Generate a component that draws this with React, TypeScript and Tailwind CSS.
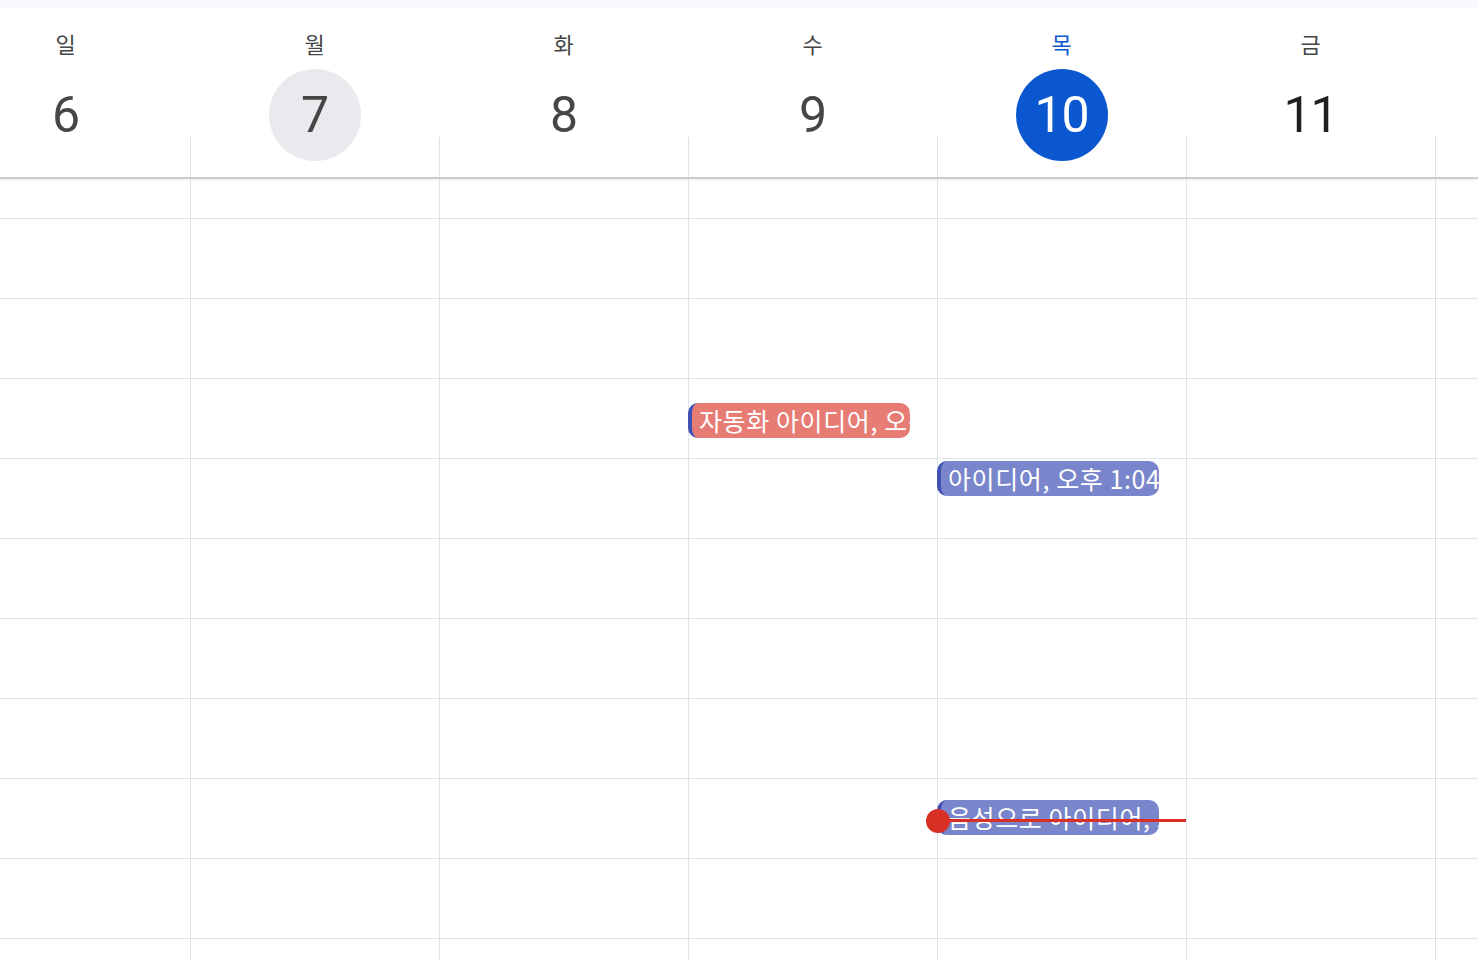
import React from 'react';

type Day = { name: string; date: number; state: 'past' | 'hover' | 'today' | 'future' | 'offscreen' };

const days: Day[] = [
  { name: '일', date: 6, state: 'past' },
  { name: '월', date: 7, state: 'hover' },
  { name: '화', date: 8, state: 'past' },
  { name: '수', date: 9, state: 'past' },
  { name: '목', date: 10, state: 'today' },
  { name: '금', date: 11, state: 'future' },
  { name: '토', date: 12, state: 'offscreen' },
];

type CalEvent = { day: number; top: number; title: string; color: 'red' | 'blue' };

const events: CalEvent[] = [
  { day: 3, top: 224, title: '자동화 아이디어, 오전 11:30', color: 'red' },
  { day: 4, top: 282, title: '아이디어, 오후 1:04', color: 'blue' },
  { day: 4, top: 621, title: '음성으로 아이디어, 오후 5:20', color: 'blue' },
];

const rows = Array.from({ length: 10 });

const font = { fontFamily: '"Noto Sans CJK KR", "Noto Sans", sans-serif' };

const DayHeader: React.FC<{ day: Day }> = ({ day }) => {
  const circle =
    day.state === 'today'
      ? 'bg-[#0b57d0] text-white'
      : day.state === 'hover'
      ? 'bg-[#e9eaed] text-[#444746]'
      : day.state === 'future'
      ? 'text-[#1f1f1f]'
      : 'text-[#444746]';

  const hidden = day.state === 'offscreen';

  return (
    <div className="w-[249px] shrink-0 flex flex-col">
      <div
        className={`mt-[20px] h-[30px] flex items-center justify-center text-[22px] leading-none ${
          day.state === 'today' ? 'text-[#0b57d0]' : 'text-[#444746]'
        }`}
      >
        {hidden ? '' : day.name}
      </div>
      <div className="mt-[11px] flex justify-center">
        <div
          className={`w-[92px] h-[92px] rounded-full flex items-center justify-center text-[50px] leading-none tracking-[-1px] ${circle}`}
          style={{ fontFamily: 'Roboto, "Open Sans", sans-serif' }}
        >
          {hidden ? '' : day.date}
        </div>
      </div>
      <div className="mt-[-24px] h-[40px] border-l border-[#dde3ea]" />
    </div>
  );
};

const EventChip: React.FC<{ ev: CalEvent }> = ({ ev }) => (
  <div
    className={`absolute left-[-1px] w-[222px] h-[35px] rounded-[10px] border-l-[4px] border-[#3f51b5] overflow-hidden flex items-center pl-[7px] whitespace-nowrap text-white text-[25px] tracking-[0.6px] leading-none ${
      ev.color === 'red' ? 'bg-[#e67c73]' : 'bg-[#7986cb]'
    }`}
    style={{ top: ev.top }}
  >
    {ev.title}
  </div>
);

export default function App() {
  return (
    <div className="w-[1478px] h-[960px] overflow-hidden bg-white" style={font}>
      <div className="h-[8px] bg-[#f8fafd]" />

      {/* Header */}
      <div className="h-[171px] border-b-2 border-[#c9ccd0] shadow-[0_1px_2px_rgba(0,0,0,0.08)] overflow-hidden">
        <div className="flex ml-[-59px]">
          {days.map((d) => (
            <DayHeader key={d.date} day={d} />
          ))}
        </div>
      </div>

      {/* Grid */}
      <div className="flex ml-[-59px]">
        {days.map((d, i) => (
          <div key={d.date} className="relative w-[249px] shrink-0 border-l border-[#dde3ea] flex flex-col">
            <div className="h-[40px] border-b border-[#dde3ea]" />
            {rows.map((_, r) => (
              <div key={r} className="h-[80px] border-b border-[#dde3ea]" />
            ))}

            {events
              .filter((ev) => ev.day === i)
              .map((ev) => (
                <EventChip key={ev.title} ev={ev} />
              ))}

            {i === 4 && (
              <>
                <div className="absolute left-0 right-0 top-[640px] h-[3px] bg-[#d93025]" />
                <div className="absolute left-[-12px] top-[630px] w-[24px] h-[24px] rounded-full bg-[#d93025]" />
              </>
            )}
          </div>
        ))}
      </div>
    </div>
  );
}
